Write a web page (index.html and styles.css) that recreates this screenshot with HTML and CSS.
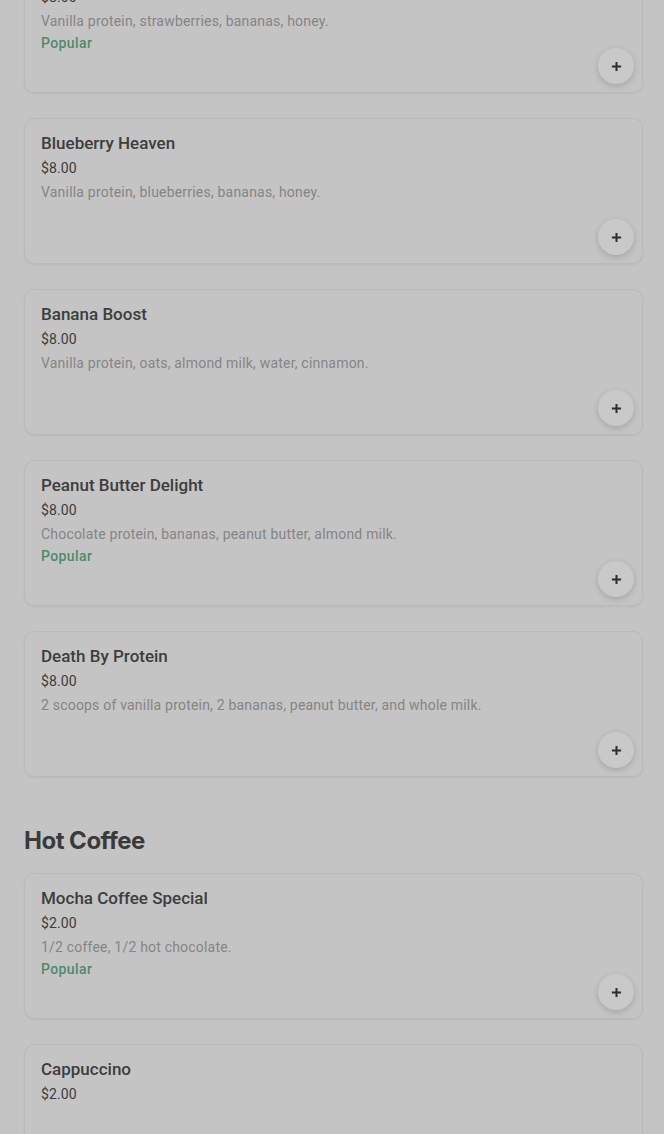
FILE: index.html
```html
<!DOCTYPE html>
<html lang="en">
<head>
  <meta charset="UTF-8" />
  <meta name="viewport" content="width=device-width, initial-scale=1.0"/>
  <title>Menu</title>
  <link rel="stylesheet" href="styles.css">
</head>
<body>

<div class="menu">

  <!-- Protein shakes (scrolled) -->
  <div class="item">
    <div class="info">
      <div class="name">Strawberry Protein</div>
      <div class="price">$8.00</div>
      <div class="desc">Vanilla protein, strawberries, bananas, honey.</div>
      <div class="tag">Popular</div>
    </div>
    <button class="add"><svg viewBox="0 0 12 12"><path d="M6 1v10M1 6h10"/></svg></button>
  </div>

  <div class="item">
    <div class="info">
      <div class="name">Blueberry Heaven</div>
      <div class="price">$8.00</div>
      <div class="desc">Vanilla protein, blueberries, bananas, honey.</div>
    </div>
    <button class="add"><svg viewBox="0 0 12 12"><path d="M6 1v10M1 6h10"/></svg></button>
  </div>

  <div class="item">
    <div class="info">
      <div class="name">Banana Boost</div>
      <div class="price">$8.00</div>
      <div class="desc">Vanilla protein, oats, almond milk, water, cinnamon.</div>
    </div>
    <button class="add"><svg viewBox="0 0 12 12"><path d="M6 1v10M1 6h10"/></svg></button>
  </div>

  <div class="item">
    <div class="info">
      <div class="name">Peanut Butter Delight</div>
      <div class="price">$8.00</div>
      <div class="desc">Chocolate protein, bananas, peanut butter, almond milk.</div>
      <div class="tag">Popular</div>
    </div>
    <button class="add"><svg viewBox="0 0 12 12"><path d="M6 1v10M1 6h10"/></svg></button>
  </div>

  <div class="item">
    <div class="info">
      <div class="name">Death By Protein</div>
      <div class="price">$8.00</div>
      <div class="desc">2 scoops of vanilla protein, 2 bananas, peanut butter, and whole milk.</div>
    </div>
    <button class="add"><svg viewBox="0 0 12 12"><path d="M6 1v10M1 6h10"/></svg></button>
  </div>

  <h2 class="section">Hot Coffee</h2>

  <div class="item">
    <div class="info">
      <div class="name">Mocha Coffee Special</div>
      <div class="price">$2.00</div>
      <div class="desc">1/2 coffee, 1/2 hot chocolate.</div>
      <div class="tag">Popular</div>
    </div>
    <button class="add"><svg viewBox="0 0 12 12"><path d="M6 1v10M1 6h10"/></svg></button>
  </div>

  <div class="item">
    <div class="info">
      <div class="name">Cappuccino</div>
      <div class="price">$2.00</div>
    </div>
    <button class="add"><svg viewBox="0 0 12 12"><path d="M6 1v10M1 6h10"/></svg></button>
  </div>

</div>

</body>
</html>
```

FILE: styles.css
```css
body {
  font-family: 'Roboto', sans-serif;
  background: #c4c4c4;
  margin: 0;
  overflow: hidden;
}
.menu {
  padding: 0 21px 0 24px;
  margin-top: -53px;
  display: flex;
  flex-direction: column;
  gap: 25px;
}
.item {
  display: flex;
  justify-content: space-between;
  min-height: 146px;
  box-sizing: border-box;
  padding: 13px 8px 8px 16px;
  border: 1px solid #bababa;
  border-radius: 10px;
  box-shadow: 0 1px 2px rgba(0, 0, 0, 0.06);
}
.name {
  font-size: 17px;
  font-weight: 500;
  line-height: 22px;
  margin-bottom: 2px;
  color: #3d3d3d;
}
.price {
  font-size: 14px;
  line-height: 24px;
  color: #3c3c3c;
  letter-spacing: 0.1px;
}
.desc {
  font-size: 14px;
  line-height: 24px;
  color: #858585;
  letter-spacing: 0.2px;
}
.tag {
  font-size: 14px;
  font-weight: 500;
  line-height: 20px;
  color: #4f8a6c;
  letter-spacing: 0.4px;
}
.add {
  align-self: flex-end;
  display: flex;
  align-items: center;
  justify-content: center;
  width: 36px;
  height: 36px;
  border-radius: 50%;
  border: none;
  background: #c9c9c9;
  box-shadow: 0 2px 6px rgba(0, 0, 0, 0.16);
  padding: 0;
}
.add svg {
  width: 11px;
  height: 11px;
  stroke: #2e2e2e;
  stroke-width: 2.2;
  fill: none;
}
.section {
  font-family: 'Inter', sans-serif;
  font-size: 24px;
  font-weight: 700;
  color: #3a3a3a;
  letter-spacing: -0.5px;
  margin: 24px 0 -8px;
  line-height: 30px;
}
```
